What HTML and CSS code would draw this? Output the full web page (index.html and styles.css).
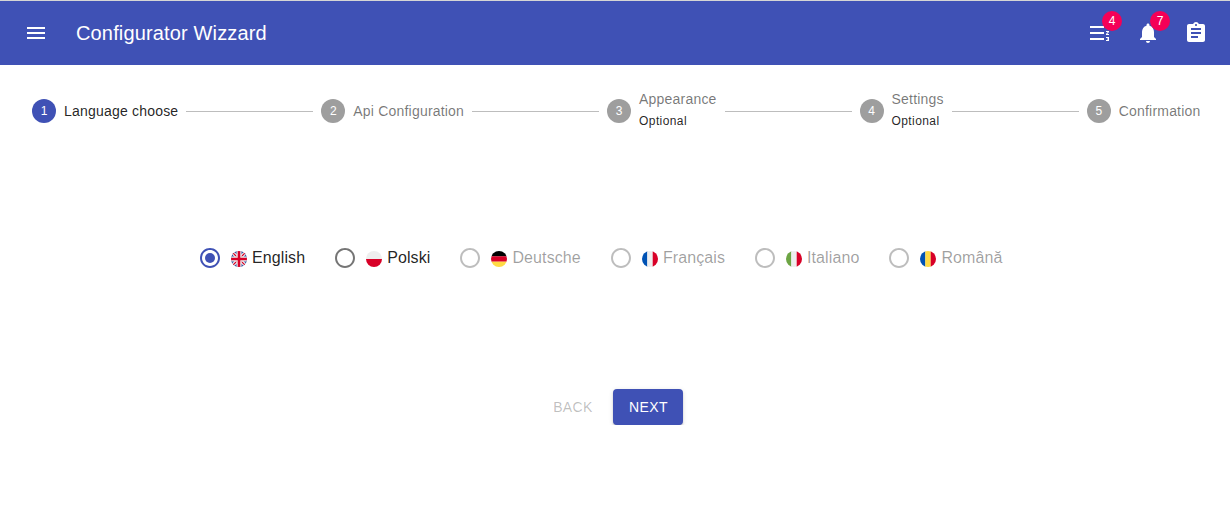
FILE: index.html
```html
<!DOCTYPE html>
<html lang="en">
<head>
  <meta charset="UTF-8">
  <title>Configurator Wizzard</title>
  <link rel="stylesheet" href="styles.css">
</head>
<body>
  <header class="appbar">
    <button class="icon-btn menu-btn" aria-label="menu">
      <svg viewBox="0 0 24 24"><path d="M3 18h18v-2H3v2zm0-5h18v-2H3v2zm0-7v2h18V6H3z"/></svg>
    </button>
    <h1 class="app-title">Configurator Wizzard</h1>
    <div class="appbar-actions">
      <button class="icon-btn" aria-label="tasks">
        <span class="badge-wrap">
          <svg viewBox="0 0 24 24"><path d="M18 17h2v.5h-1v1h1v.5h-2v1h3v-4h-3zm1-9h1V4h-2v1h1zm-1 3h1.8L18 13.1v.9h3v-1h-1.8l1.8-2.1V10h-3zM2 5h14v2H2zm0 12h14v2H2zm0-6h14v2H2z"/></svg>
          <span class="badge">4</span>
        </span>
      </button>
      <button class="icon-btn" aria-label="notifications">
        <span class="badge-wrap">
          <svg viewBox="0 0 24 24"><path d="M12 22c1.1 0 2-.9 2-2h-4c0 1.1.89 2 2 2zm6-6v-5c0-3.07-1.64-5.64-4.5-6.32V4c0-.83-.67-1.5-1.5-1.5s-1.5.67-1.5 1.5v.68C7.63 5.36 6 7.92 6 11v5l-2 2v1h16v-1l-2-2z"/></svg>
          <span class="badge">7</span>
        </span>
      </button>
      <button class="icon-btn" aria-label="clipboard">
        <svg viewBox="0 0 24 24"><path d="M19 3h-4.18C14.4 1.84 13.3 1 12 1c-1.3 0-2.4.84-2.82 2H5c-1.1 0-2 .9-2 2v14c0 1.1.9 2 2 2h14c1.1 0 2-.9 2-2V5c0-1.1-.9-2-2-2zm-7 0c.55 0 1 .45 1 1s-.45 1-1 1-1-.45-1-1 .45-1 1-1zm2 14H7v-2h7v2zm3-4H7v-2h10v2zm0-4H7V7h10v2z"/></svg>
      </button>
    </div>
  </header>

  <div class="stepper">
    <div class="step active">
      <span class="step-num">1</span>
      <span class="step-label"><span class="step-name">Language choose</span></span>
    </div>
    <div class="step-line"></div>
    <div class="step">
      <span class="step-num">2</span>
      <span class="step-label"><span class="step-name">Api Configuration</span></span>
    </div>
    <div class="step-line"></div>
    <div class="step">
      <span class="step-num">3</span>
      <span class="step-label"><span class="step-name">Appearance</span><span class="step-opt">Optional</span></span>
    </div>
    <div class="step-line"></div>
    <div class="step">
      <span class="step-num">4</span>
      <span class="step-label"><span class="step-name">Settings</span><span class="step-opt">Optional</span></span>
    </div>
    <div class="step-line"></div>
    <div class="step">
      <span class="step-num">5</span>
      <span class="step-label"><span class="step-name">Confirmation</span></span>
    </div>
  </div>

  <div class="languages">
    <label class="lang checked">
      <svg class="radio" viewBox="0 0 24 24"><path d="M12 2C6.48 2 2 6.48 2 12s4.48 10 10 10 10-4.48 10-10S17.52 2 12 2zm0 18c-4.42 0-8-3.58-8-8s3.58-8 8-8 8 3.58 8 8-3.58 8-8 8z"/><circle cx="12" cy="12" r="5"/></svg>
      <svg class="flag" viewBox="0 0 16 16">
        <defs><clipPath id="round1"><circle cx="8" cy="8" r="8"/></clipPath></defs>
        <g clip-path="url(#round1)">
          <rect width="16" height="16" fill="#2b4a9b"/>
          <path d="M0 0L16 16M16 0L0 16" stroke="#eee" stroke-width="3.4"/>
          <path d="M0 0L16 16M16 0L0 16" stroke="#d80027" stroke-width="1.2"/>
          <path d="M8 0V16M0 8H16" stroke="#eee" stroke-width="5"/>
          <path d="M8 0V16M0 8H16" stroke="#d80027" stroke-width="2.6"/>
        </g>
      </svg>
      <span>English</span>
    </label>
    <label class="lang">
      <svg class="radio" viewBox="0 0 24 24"><path d="M12 2C6.48 2 2 6.48 2 12s4.48 10 10 10 10-4.48 10-10S17.52 2 12 2zm0 18c-4.42 0-8-3.58-8-8s3.58-8 8-8 8 3.58 8 8-3.58 8-8 8z"/></svg>
      <svg class="flag" viewBox="0 0 16 16">
        <defs><clipPath id="round2"><circle cx="8" cy="8" r="8"/></clipPath></defs>
        <g clip-path="url(#round2)">
          <rect width="16" height="8" fill="#eee"/>
          <rect y="8" width="16" height="8" fill="#d80027"/>
        </g>
      </svg>
      <span>Polski</span>
    </label>
    <label class="lang disabled">
      <svg class="radio" viewBox="0 0 24 24"><path d="M12 2C6.48 2 2 6.48 2 12s4.48 10 10 10 10-4.48 10-10S17.52 2 12 2zm0 18c-4.42 0-8-3.58-8-8s3.58-8 8-8 8 3.58 8 8-3.58 8-8 8z"/></svg>
      <svg class="flag" viewBox="0 0 16 16">
        <defs><clipPath id="round3"><circle cx="8" cy="8" r="8"/></clipPath></defs>
        <g clip-path="url(#round3)">
          <rect width="16" height="5.4" fill="#000"/>
          <rect y="5.3" width="16" height="5.4" fill="#d80027"/>
          <rect y="10.7" width="16" height="5.3" fill="#ffda44"/>
        </g>
      </svg>
      <span>Deutsche</span>
    </label>
    <label class="lang disabled">
      <svg class="radio" viewBox="0 0 24 24"><path d="M12 2C6.48 2 2 6.48 2 12s4.48 10 10 10 10-4.48 10-10S17.52 2 12 2zm0 18c-4.42 0-8-3.58-8-8s3.58-8 8-8 8 3.58 8 8-3.58 8-8 8z"/></svg>
      <svg class="flag" viewBox="0 0 16 16">
        <defs><clipPath id="round4"><circle cx="8" cy="8" r="8"/></clipPath></defs>
        <g clip-path="url(#round4)">
          <rect width="5.4" height="16" fill="#0052b4"/>
          <rect x="5.3" width="5.4" height="16" fill="#eee"/>
          <rect x="10.7" width="5.3" height="16" fill="#d80027"/>
        </g>
      </svg>
      <span>Français</span>
    </label>
    <label class="lang disabled">
      <svg class="radio" viewBox="0 0 24 24"><path d="M12 2C6.48 2 2 6.48 2 12s4.48 10 10 10 10-4.48 10-10S17.52 2 12 2zm0 18c-4.42 0-8-3.58-8-8s3.58-8 8-8 8 3.58 8 8-3.58 8-8 8z"/></svg>
      <svg class="flag" viewBox="0 0 16 16">
        <defs><clipPath id="round5"><circle cx="8" cy="8" r="8"/></clipPath></defs>
        <g clip-path="url(#round5)">
          <rect width="5.4" height="16" fill="#6da544"/>
          <rect x="5.3" width="5.4" height="16" fill="#eee"/>
          <rect x="10.7" width="5.3" height="16" fill="#d80027"/>
        </g>
      </svg>
      <span>Italiano</span>
    </label>
    <label class="lang disabled">
      <svg class="radio" viewBox="0 0 24 24"><path d="M12 2C6.48 2 2 6.48 2 12s4.48 10 10 10 10-4.48 10-10S17.52 2 12 2zm0 18c-4.42 0-8-3.58-8-8s3.58-8 8-8 8 3.58 8 8-3.58 8-8 8z"/></svg>
      <svg class="flag" viewBox="0 0 16 16">
        <defs><clipPath id="round6"><circle cx="8" cy="8" r="8"/></clipPath></defs>
        <g clip-path="url(#round6)">
          <rect width="5.4" height="16" fill="#0052b4"/>
          <rect x="5.3" width="5.4" height="16" fill="#ffda44"/>
          <rect x="10.7" width="5.3" height="16" fill="#d80027"/>
        </g>
      </svg>
      <span>Română</span>
    </label>
  </div>

  <div class="actions">
    <button class="btn btn-text" disabled>Back</button>
    <button class="btn btn-primary">Next</button>
  </div>
</body>
</html>
```

FILE: styles.css
```css
* {
  box-sizing: border-box;
}
body {
  margin: 0;
  border-top: 1px solid #d5d5d5;
  background-color: #fff;
  font-family: 'Liberation Sans', Arial, sans-serif;
  color: rgba(0,0,0,0.87);
}
.appbar {
  display: flex;
  align-items: center;
  height: 64px;
  padding: 0 10px 0 12px;
  background-color: #3f51b5;
  color: #fff;
}
.icon-btn {
  display: flex;
  padding: 12px;
  border: none;
  background: none;
  color: inherit;
}
.icon-btn svg {
  display: block;
  width: 24px;
  height: 24px;
  fill: currentColor;
}
.menu-btn {
  margin-right: 16px;
}
.app-title {
  margin: 0;
  font-size: 20px;
  font-weight: normal;
  letter-spacing: 0.15px;
  line-height: 1.6;
}
.appbar-actions {
  display: flex;
  margin-left: auto;
}
.badge-wrap {
  position: relative;
  display: block;
}
.badge {
  position: absolute;
  top: -10px;
  right: -10px;
  width: 20px;
  height: 20px;
  border-radius: 50%;
  background-color: #f50057;
  color: #fff;
  font-family: 'Liberation Sans', Arial, sans-serif;
  font-size: 12px;
  line-height: 20px;
  text-align: center;
}

.stepper {
  display: flex;
  align-items: center;
  padding: 24px 21.5px 24px 24px;
}
.step {
  display: flex;
  align-items: center;
  padding: 0 8px;
}
.step-num {
  display: flex;
  align-items: center;
  justify-content: center;
  flex-shrink: 0;
  width: 24px;
  height: 24px;
  margin-right: 8px;
  border-radius: 50%;
  background-color: #9e9e9e;
  color: #fff;
  font-size: 12px;
}
.step.active .step-num {
  background-color: #3f51b5;
}
.step-label {
  display: flex;
  flex-direction: column;
}
.step-name {
  font-size: 14px;
  letter-spacing: 0.2px;
  line-height: 20px;
  color: rgba(0,0,0,0.54);
  white-space: nowrap;
}
.step.active .step-name {
  color: rgba(0,0,0,0.87);
}
.step-opt {
  font-size: 12px;
  letter-spacing: 0.4px;
  line-height: 24px;
  color: rgba(0,0,0,0.87);
}
.step-line {
  flex: 1 1 auto;
  border-top: 1px solid #bdbdbd;
}

.languages {
  display: flex;
  align-items: center;
  gap: 19px;
  height: 42px;
  margin-top: 80px;
  padding-left: 189px;
}
.lang {
  display: flex;
  align-items: center;
  font-size: 16px;
  letter-spacing: 0.1px;
  line-height: 24px;
}
.radio {
  width: 24px;
  height: 24px;
  margin: 9px;
  fill: rgba(0,0,0,0.54);
}
.lang.checked .radio {
  fill: #3f51b5;
}
.flag {
  width: 16px;
  height: 16px;
  margin: 2px 5px 0 0;
}
.lang.disabled {
  color: rgba(0,0,0,0.38);
}
.lang.disabled .radio {
  fill: rgba(0,0,0,0.26);
}

.actions {
  display: flex;
  gap: 8px;
  margin-top: 110px;
  padding-left: 541px;
}
.btn {
  min-width: 64px;
  height: 36px;
  border: none;
  border-radius: 4px;
  font-family: inherit;
  font-size: 14px;
  letter-spacing: 0.02857em;
  text-transform: uppercase;
}
.btn-text {
  padding: 6px 8px;
  background: none;
  color: rgba(0,0,0,0.26);
}
.btn-primary {
  padding: 6px 15px 6px 16px;
  background-color: #3f51b5;
  color: #fff;
  box-shadow: 0 3px 1px -2px rgba(0,0,0,0.2), 0 2px 2px 0 rgba(0,0,0,0.14), 0 1px 5px 0 rgba(0,0,0,0.12);
}
```
